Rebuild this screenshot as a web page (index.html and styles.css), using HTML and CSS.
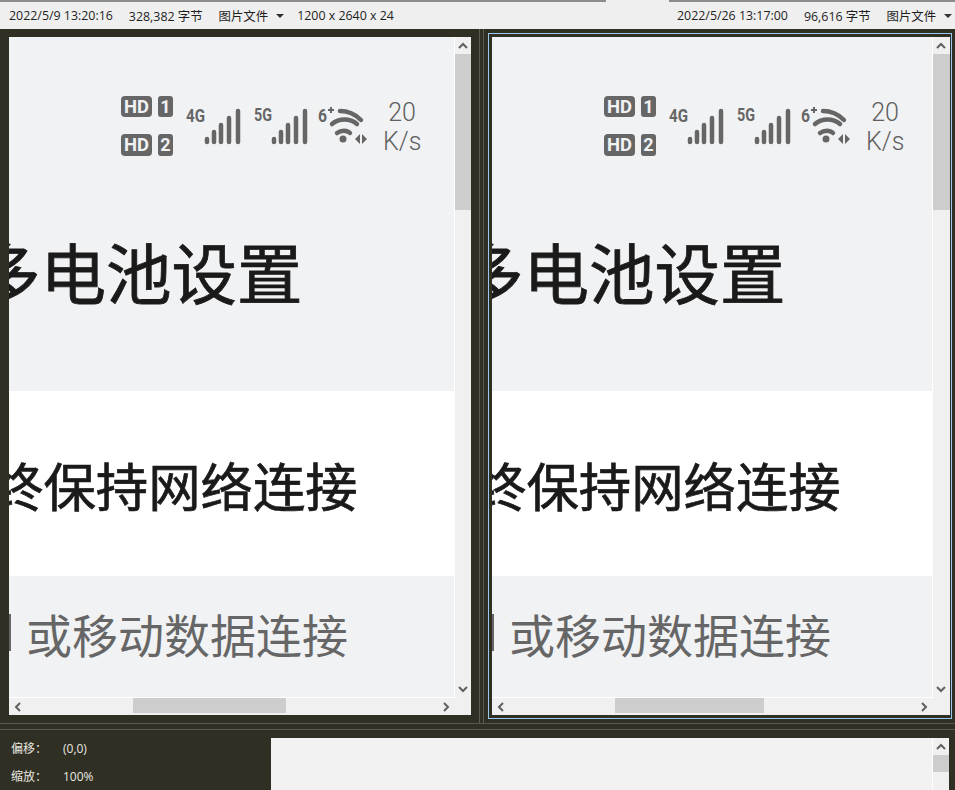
FILE: index.html
```html
<!DOCTYPE html>
<html lang="zh-CN">
<head>
  <meta charset="UTF-8">
  <title>图片比较</title>
  <link rel="stylesheet" href="styles.css">
</head>
<body>

  <div class="tabline"><span class="tabline-a"></span><span class="tabline-b"></span></div>

  <div class="infobar">
    <div class="info info-left">
      <span>2022/5/9 13:20:16</span>
      <span>328,382 字节</span>
      <span class="filetype">图片文件<i class="caret"></i></span>
      <span>1200 x 2640 x 24</span>
    </div>
    <div class="info info-right">
      <span>2022/5/26 13:17:00</span>
      <span>96,616 字节</span>
      <span class="filetype">图片文件<i class="caret"></i></span>
    </div>
  </div>

  <div class="compare">

    <div class="pane pane-left">
      <div class="viewer">
        <div class="shot">
          <div class="sec sec-status">
            <div class="status">
              <svg class="status-icons" width="247" height="62" viewBox="0 0 247 62">
                <rect x="0" y="0" width="31" height="21" rx="4" fill="#666"/>
                <text x="3" y="16.500" class="badge" textLength="25" lengthAdjust="spacingAndGlyphs">HD</text>
                <rect x="37" y="0" width="15" height="21" rx="3" fill="#666"/>
                <text x="44.500" y="16.500" class="badge badge-num">1</text>
                <rect x="0" y="38" width="31" height="22" rx="4" fill="#666"/>
                <text x="3" y="55" class="badge" textLength="25" lengthAdjust="spacingAndGlyphs">HD</text>
                <rect x="37" y="38" width="15" height="22" rx="3" fill="#666"/>
                <text x="44.500" y="55" class="badge badge-num">2</text>
                <text x="65" y="26" class="net" textLength="19" lengthAdjust="spacingAndGlyphs">4G</text>
                <path class="bars" d="M86 43v3M93 36v10M100 29v17M108 22v24M117 15v31"/>
                <text x="133" y="25" class="net" textLength="18" lengthAdjust="spacingAndGlyphs">5G</text>
                <path class="bars" d="M153 43v3M160 36v10M167 29v17M175 22v24M184 15v31"/>
                <text x="197" y="26" class="net" textLength="9" lengthAdjust="spacingAndGlyphs">6</text>
                <path class="plus" d="M210 11v6M207 14h6"/>
                <path class="wifi" d="M219 15c7 0 15 3 21 9"/>
                <path class="wifi" d="M211 28c7-6 18-6 25 0"/>
                <path class="wifi" d="M216 37c4-3 10-3 13 0"/>
                <circle cx="222" cy="43" r="3.500" fill="#666"/>
                <path d="M239 38v10l-5-5zM241 38v10l5-5z" fill="#666"/>
              </svg>
              <div class="speed">20<br>K/s</div>
            </div>
            <div class="title">多电池设置</div>
          </div>
          <div class="sec sec-white">
            <div class="row-title">终保持网络连接</div>
          </div>
          <div class="sec sec-note">
            <i class="sliver"></i>
            <div class="note">或移动数据连接</div>
          </div>
        </div>
      </div>
      <div class="vbar">
        <div class="arrow"><svg width="10" height="7" viewBox="0 0 10 7"><path d="M1 6l4-4 4 4"/></svg></div>
        <div class="vthumb"></div>
        <div class="grow"></div>
        <div class="arrow"><svg width="10" height="7" viewBox="0 0 10 7"><path d="M1 1l4 4 4-4"/></svg></div>
      </div>
      <div class="hbar">
        <div class="arrow"><svg width="7" height="10" viewBox="0 0 7 10"><path d="M6 1L2 5l4 4"/></svg></div>
        <div class="hthumb hthumb-left"></div>
        <div class="grow"></div>
        <div class="arrow"><svg width="7" height="10" viewBox="0 0 7 10"><path d="M1 1l4 4-4 4"/></svg></div>
      </div>
    </div>

    <div class="splitter"></div>

    <div class="pane-wrap">
      <div class="pane pane-right">
        <div class="viewer">
          <div class="shot">
            <div class="sec sec-status">
              <div class="status">
                <svg class="status-icons" width="247" height="62" viewBox="0 0 247 62">
                  <rect x="0" y="0" width="31" height="21" rx="4" fill="#666"/>
                  <text x="3" y="16.500" class="badge" textLength="25" lengthAdjust="spacingAndGlyphs">HD</text>
                  <rect x="37" y="0" width="15" height="21" rx="3" fill="#666"/>
                  <text x="44.500" y="16.500" class="badge badge-num">1</text>
                  <rect x="0" y="38" width="31" height="22" rx="4" fill="#666"/>
                  <text x="3" y="55" class="badge" textLength="25" lengthAdjust="spacingAndGlyphs">HD</text>
                  <rect x="37" y="38" width="15" height="22" rx="3" fill="#666"/>
                  <text x="44.500" y="55" class="badge badge-num">2</text>
                  <text x="65" y="26" class="net" textLength="19" lengthAdjust="spacingAndGlyphs">4G</text>
                  <path class="bars" d="M86 43v3M93 36v10M100 29v17M108 22v24M117 15v31"/>
                  <text x="133" y="25" class="net" textLength="18" lengthAdjust="spacingAndGlyphs">5G</text>
                  <path class="bars" d="M153 43v3M160 36v10M167 29v17M175 22v24M184 15v31"/>
                  <text x="197" y="26" class="net" textLength="9" lengthAdjust="spacingAndGlyphs">6</text>
                  <path class="plus" d="M210 11v6M207 14h6"/>
                  <path class="wifi" d="M219 15c7 0 15 3 21 9"/>
                  <path class="wifi" d="M211 28c7-6 18-6 25 0"/>
                  <path class="wifi" d="M216 37c4-3 10-3 13 0"/>
                  <circle cx="222" cy="43" r="3.500" fill="#666"/>
                  <path d="M239 38v10l-5-5zM241 38v10l5-5z" fill="#666"/>
                </svg>
                <div class="speed">20<br>K/s</div>
              </div>
              <div class="title">多电池设置</div>
            </div>
            <div class="sec sec-white">
              <div class="row-title">终保持网络连接</div>
            </div>
            <div class="sec sec-note">
              <i class="sliver"></i>
              <div class="note">或移动数据连接</div>
            </div>
          </div>
        </div>
        <div class="vbar">
          <div class="arrow"><svg width="10" height="7" viewBox="0 0 10 7"><path d="M1 6l4-4 4 4"/></svg></div>
          <div class="vthumb"></div>
          <div class="grow"></div>
          <div class="arrow"><svg width="10" height="7" viewBox="0 0 10 7"><path d="M1 1l4 4 4-4"/></svg></div>
        </div>
        <div class="hbar">
          <div class="arrow"><svg width="7" height="10" viewBox="0 0 7 10"><path d="M6 1L2 5l4 4"/></svg></div>
          <div class="hthumb hthumb-right"></div>
          <div class="grow"></div>
          <div class="arrow"><svg width="7" height="10" viewBox="0 0 7 10"><path d="M1 1l4 4-4 4"/></svg></div>
        </div>
      </div>
    </div>

  </div>

  <div class="lower">
    <div class="props">
      <div class="prop"><span class="prop-name">偏移：</span><span>(0,0)</span></div>
      <div class="prop"><span class="prop-name">缩放：</span><span>100%</span></div>
    </div>
    <div class="preview">
      <div class="preview-body"></div>
      <div class="vbar">
        <div class="arrow"><svg width="10" height="7" viewBox="0 0 10 7"><path d="M1 6l4-4 4 4"/></svg></div>
        <div class="preview-thumb"></div>
      </div>
    </div>
  </div>

</body>
</html>
```

FILE: styles.css
```css
html, body {
  margin: 0;
  height: 100%;
}

body {
  width: 955px;
  height: 790px;
  overflow: hidden;
  background-color: #302f24;
  font-family: "Open Sans", "Noto Sans CJK SC", sans-serif;
  font-size: 12.4px;
  color: #1e1e1e;
}

.tabline {
  display: flex;
  height: 2px;
  background-color: #efefef;
}

.tabline-a {
  width: 606px;
  background-color: #8c8c8c;
}

.tabline-b {
  margin-left: 63px;
  flex: 1;
  background-color: #8c8c8c;
}

.infobar {
  display: flex;
  height: 27px;
  background-color: #efefef;
  align-items: center;
}

.info {
  display: flex;
  gap: 16px;
  white-space: nowrap;
}

.info-left {
  width: 677px;
  padding-left: 9px;
  box-sizing: border-box;
}

.filetype {
  display: flex;
  align-items: center;
}

.caret {
  width: 0;
  height: 0;
  margin: 0 -3px 0 8px;
  border-left: 4px solid transparent;
  border-right: 4px solid transparent;
  border-top: 4px solid #333;
}

.compare {
  display: flex;
  height: 694px;
  border-bottom: 1px solid #5a5a50;
}

.splitter {
  width: 3px;
  border-left: 1px solid #5a5a50;
  border-right: 1px solid #5a5a50;
}

.pane {
  display: grid;
  grid-template-rows: 661px 17px;
  background-color: #f0f0f0;
}

.pane-left {
  width: 462px;
  height: 678px;
  margin: 8px 8px 0 9px;
  grid-template-columns: 446px 16px;
}

.pane-wrap {
  width: 464px;
  height: 686px;
  margin: 4px 0 0 4px;
  box-sizing: border-box;
  padding: 3px 2px 3px 3px;
  border: 1px solid #99c9ef;
}

.pane-right {
  width: 458px;
  height: 678px;
  grid-template-columns: 441px 17px;
}

.viewer {
  overflow: hidden;
  background-color: #f1f2f4;
  border-right: 1px solid #fff;
  border-bottom: 1px solid #fff;
}

.shot {
  font-family: "Noto Sans CJK SC", sans-serif;
  white-space: nowrap;
}

.sec {
  box-sizing: border-box;
}

.sec-status {
  height: 354px;
  padding-top: 59px;
  overflow: hidden;
}

.sec-white {
  height: 185px;
  background-color: #fff;
}

.sec-note {
  display: flex;
  align-items: center;
  height: 121px;
}

.status {
  display: flex;
  margin-left: 112px;
}

.status-icons {
  display: block;
  flex: none;
}

.badge {
  font-family: Roboto, sans-serif;
  font-size: 18px;
  font-weight: 700;
  fill: #f1f2f4;
}

.badge-num {
  text-anchor: middle;
}

.net {
  font-family: Roboto, sans-serif;
  font-size: 19px;
  font-weight: 700;
  fill: #666;
}

.bars {
  fill: none;
  stroke: #666;
  stroke-width: 4.500;
  stroke-linecap: round;
}

.plus {
  fill: none;
  stroke: #666;
  stroke-width: 2;
}

.wifi {
  fill: none;
  stroke: #666;
  stroke-width: 4.500;
  stroke-linecap: round;
}

.speed {
  margin: 2px 0 0 15px;
  width: 38px;
  font-family: Roboto, sans-serif;
  font-size: 25px;
  font-weight: 300;
  line-height: 29px;
  color: #606060;
  text-align: center;
}

.title {
  margin: 68px 0 0 -34px;
  font-size: 65.500px;
  font-weight: 400;
  line-height: 90px;
  color: #1a1a1a;
  -webkit-text-stroke: 0.8px #1a1a1a;
}

.row-title {
  margin-left: -18px;
  padding-top: 56px;
  font-size: 52.400px;
  font-weight: 400;
  line-height: 75px;
  color: #1a1a1a;
  -webkit-text-stroke: 0.7px #1a1a1a;
}

.sliver {
  flex: none;
  width: 2px;
  height: 37px;
  margin-top: -8px;
  background-color: #666;
}

.note {
  margin: -8px 0 0 15px;
  font-size: 46px;
  line-height: 66px;
  color: #666;
}

.vbar {
  display: flex;
  flex-direction: column;
  background-color: #f0f0f0;
}

.hbar {
  display: flex;
  height: 16px;
  padding-right: 1px;
  background-color: #f0f0f0;
}

.grow {
  flex: 1;
}

.arrow {
  display: flex;
  flex: none;
  align-items: center;
  justify-content: center;
  height: 17px;
  width: 16px;
}

.arrow path {
  fill: none;
  stroke: #606060;
  stroke-width: 2;
}

.vthumb {
  height: 156px;
  background-color: #cdcdcd;
}

.hthumb {
  height: 15px;
  background-color: #cdcdcd;
}

.hthumb-left {
  width: 153px;
  margin-left: 108px;
}

.hthumb-right {
  width: 149px;
  margin-left: 107px;
}

.lower {
  display: flex;
  height: 65px;
  margin-top: 5px;
  border-top: 1px solid #5a5a50;
  box-sizing: border-box;
}

.props {
  width: 260px;
  padding: 10px 0 0 11px;
  font-size: 12px;
  color: #e8e8e0;
}

.prop {
  display: flex;
  height: 28px;
  line-height: 18px;
}

.prop-name {
  width: 52px;
}

.preview {
  display: flex;
  width: 678px;
  margin-top: 8px;
  background-color: #f0f0f0;
}

.preview-body {
  flex: 1;
  background-color: #f2f2f2;
  border-right: 1px solid #fff;
}

.preview-thumb {
  height: 17px;
  background-color: #cdcdcd;
}
```
